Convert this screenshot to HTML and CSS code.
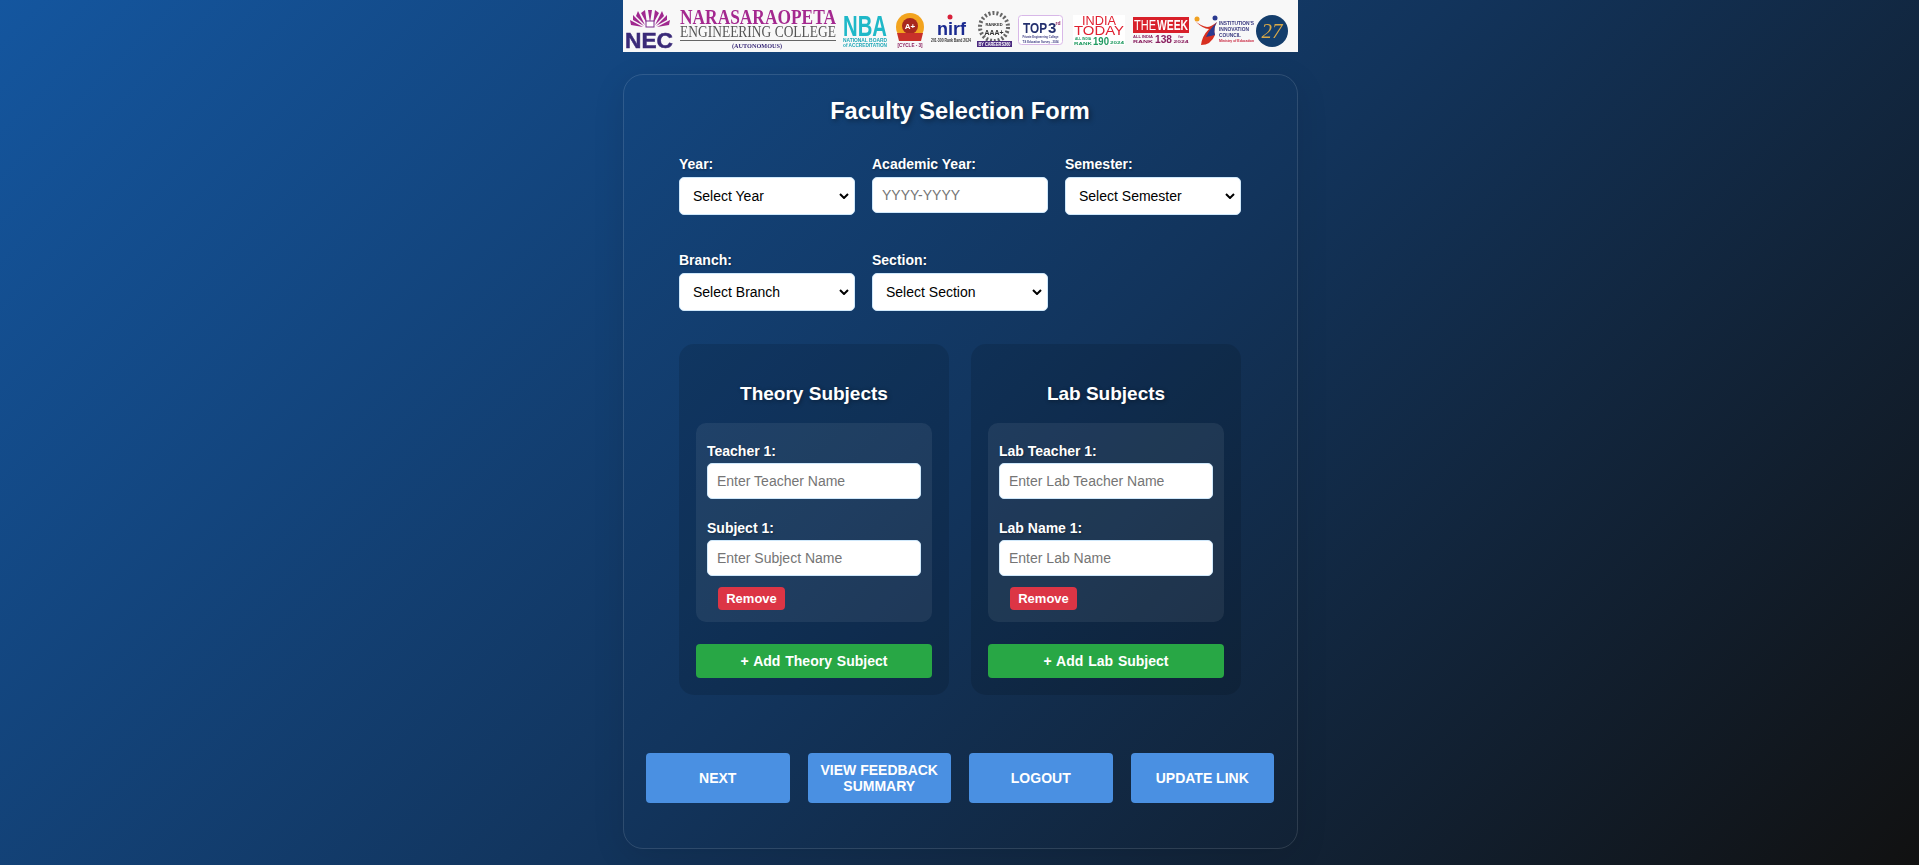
FILE: index.html
```html
<!DOCTYPE html>
<html lang="en">

<head>
    <meta charset="UTF-8">
    <meta name="viewport" content="width=device-width, initial-scale=1.0">
    <title>Faculty Selection Form</title>
    <link rel="stylesheet" href="styles.css">
</head>

<body>
    <div class="banner">
        <svg width="675" height="52" viewBox="0 0 675 52">
            <!-- NEC -->
            <g fill="#a0288f">
                <path d="M20 27 L8 25 L7 20 Z M21 26 L10 20 L10 15 Z M22 25 L13 16 L15 11 Z M24 24 L18 13 L22 10 Z M27 23 L25 10 L29 10 Z M30 24 L32 10 L36 13 Z M32 25 L39 11 L41 16 Z M33 26 L44 15 L44 20 Z M34 27 L47 20 L46 25 Z"/>
            </g>
            <rect x="23" y="21" width="8" height="6" fill="#fff" stroke="#7d2a8e"/>
            <text x="2" y="48" class="nec" textLength="48" lengthAdjust="spacingAndGlyphs">NEC</text>
            <!-- college name -->
            <text x="57" y="24" class="nara" textLength="156" lengthAdjust="spacingAndGlyphs">NARASARAOPETA</text>
            <text x="57" y="37" class="engg" textLength="156" lengthAdjust="spacingAndGlyphs">ENGINEERING COLLEGE</text>
            <rect x="57" y="40" width="156" height="1" fill="#666"/>
            <text x="134" y="48" class="auto" textLength="50" lengthAdjust="spacingAndGlyphs">(AUTONOMOUS)</text>
            <!-- NBA -->
            <text x="220" y="36" class="nba" textLength="44" lengthAdjust="spacingAndGlyphs">NBA</text>
            <text x="242" y="41.5" class="tiny teal" textLength="44" lengthAdjust="spacingAndGlyphs">NATIONAL BOARD</text>
            <text x="242" y="47" class="tiny teal" textLength="44" lengthAdjust="spacingAndGlyphs">of ACCREDITATION</text>
            <!-- NAAC -->
            <circle cx="287" cy="27" r="14" fill="#f3a41f"/>
            <circle cx="287" cy="26" r="8" fill="#a8281f"/>
            <text x="287" y="29" class="mid white">A+</text>
            <path d="M274 33 H300 L298 41 H276 Z" fill="#c8302a"/>
            <text x="287" y="47" class="tiny wine" textLength="25" lengthAdjust="spacingAndGlyphs">[CYCLE - 3]</text>
            <!-- nirf -->
            <text x="314" y="35" class="nirf" textLength="29" lengthAdjust="spacingAndGlyphs">nirf</text>
            <circle cx="327" cy="17" r="2.5" fill="#d8203a"/>
            <text x="328" y="42" class="tiny dark" textLength="40" lengthAdjust="spacingAndGlyphs">201-300 Rank Band 2024</text>
            <!-- AAA -->
            <circle cx="371" cy="27" r="14" fill="none" stroke="#666" stroke-width="4" stroke-dasharray="2 2"/>
            <text x="371" y="26" class="micro dark">RANKED</text>
            <text x="371" y="35" class="mid dark" textLength="19" lengthAdjust="spacingAndGlyphs">AAA+</text>
            <rect x="354" y="41" width="35" height="6" fill="#4b2a80"/>
            <text x="371.5" y="46" class="tiny white" textLength="32" lengthAdjust="spacingAndGlyphs">BY CAREERS360</text>
            <!-- top 3 -->
            <rect x="395.5" y="15.5" width="44" height="29" rx="3" fill="#fff" stroke="#d8b8e8"/>
            <text x="400" y="33" class="top" textLength="24" lengthAdjust="spacingAndGlyphs">TOP</text>
            <text x="425" y="33" class="top">3</text>
            <text x="435" y="25" class="tiny wine">rd</text>
            <text x="417.5" y="38" class="micro navy" textLength="36" lengthAdjust="spacingAndGlyphs">Private Engineering College</text>
            <text x="417.5" y="43" class="micro navy" textLength="36" lengthAdjust="spacingAndGlyphs">T.S Education Survey - 2024</text>
            <!-- india today -->
            <rect x="450" y="15" width="52" height="30" fill="#fff"/>
            <text x="476" y="25" class="today" textLength="34" lengthAdjust="spacingAndGlyphs">INDIA</text>
            <text x="476" y="35" class="today" textLength="50" lengthAdjust="spacingAndGlyphs">TODAY</text>
            <text x="460" y="40" class="micro green" textLength="16" lengthAdjust="spacingAndGlyphs">ALL INDIA</text>
            <text x="460" y="44.5" class="micro green" textLength="18" lengthAdjust="spacingAndGlyphs">RANK</text>
            <text x="478" y="44.5" class="rank green" textLength="16" lengthAdjust="spacingAndGlyphs">190</text>
            <text x="494" y="44" class="micro green" textLength="14" lengthAdjust="spacingAndGlyphs">2024</text>
            <!-- the week -->
            <rect x="510" y="17" width="56" height="16" fill="#d8202a"/>
            <text x="511" y="30" class="the" textLength="22" lengthAdjust="spacingAndGlyphs">THE</text>
            <text x="534" y="30" class="week" textLength="31" lengthAdjust="spacingAndGlyphs">WEEK</text>
            <text x="520" y="38" class="micro wine" textLength="20" lengthAdjust="spacingAndGlyphs">ALL INDIA</text>
            <text x="520" y="43" class="micro wine" textLength="20" lengthAdjust="spacingAndGlyphs">RANK</text>
            <text x="540.5" y="43" class="rank wine" textLength="17" lengthAdjust="spacingAndGlyphs">138</text>
            <text x="558" y="38" class="micro wine">for</text>
            <text x="558" y="43" class="micro wine" textLength="15" lengthAdjust="spacingAndGlyphs">2024</text>
            <!-- iic -->
            <path d="M572 21 Q580 29 586 29 Q579 36 578 45 Q588 45 592 35 Q590 28 594 22 Q588 27 584 27 Q578 26 572 21 Z" fill="#d83020"/>
            <path d="M594 22 Q590 28 592 35 L583 37 Q586 30 594 22 Z" fill="#2a3a90"/>
            <circle cx="574" cy="19" r="2.5" fill="#f0a020"/>
            <circle cx="592" cy="18" r="2.5" fill="#2a3a90"/>
            <text x="596" y="25" class="tiny navy start" textLength="35" lengthAdjust="spacingAndGlyphs">INSTITUTION'S</text>
            <text x="596" y="31" class="tiny navy start" textLength="30" lengthAdjust="spacingAndGlyphs">INNOVATION</text>
            <text x="596" y="37" class="tiny navy start" textLength="22" lengthAdjust="spacingAndGlyphs">COUNCIL</text>
            <text x="596" y="42" class="micro red start" textLength="35" lengthAdjust="spacingAndGlyphs">Ministry of Education</text>
            <!-- 27 -->
            <circle cx="649" cy="31" r="16" fill="#143e6c"/>
            <text x="649" y="38" class="years">27</text>
        </svg>
    </div>

    <div class="card">
        <h2 class="title">Faculty Selection Form</h2>

        <div class="row">
            <div class="field">
                <label>Year:</label>
                <select><option>Select Year</option></select>
            </div>
            <div class="field">
                <label>Academic Year:</label>
                <input type="text" placeholder="YYYY-YYYY">
            </div>
            <div class="field">
                <label>Semester:</label>
                <select><option>Select Semester</option></select>
            </div>
        </div>

        <div class="row">
            <div class="field">
                <label>Branch:</label>
                <select><option>Select Branch</option></select>
            </div>
            <div class="field">
                <label>Section:</label>
                <select><option>Select Section</option></select>
            </div>
        </div>

        <div class="subjects">
            <div class="panel">
                <h3>Theory Subjects</h3>
                <div class="entry">
                    <label>Teacher 1:</label>
                    <input type="text" placeholder="Enter Teacher Name">
                    <label class="second">Subject 1:</label>
                    <input type="text" placeholder="Enter Subject Name">
                    <button class="remove">Remove</button>
                </div>
                <button class="add">+ Add Theory Subject</button>
            </div>
            <div class="panel">
                <h3>Lab Subjects</h3>
                <div class="entry">
                    <label>Lab Teacher 1:</label>
                    <input type="text" placeholder="Enter Lab Teacher Name">
                    <label class="second">Lab Name 1:</label>
                    <input type="text" placeholder="Enter Lab Name">
                    <button class="remove">Remove</button>
                </div>
                <button class="add">+ Add Lab Subject</button>
            </div>
        </div>

        <div class="actions">
            <button>NEXT</button>
            <button>VIEW FEEDBACK SUMMARY</button>
            <button>LOGOUT</button>
            <button>UPDATE LINK</button>
        </div>
    </div>
</body>

</html>
```

FILE: styles.css
```css
* {
    box-sizing: border-box;
}

html {
    height: 100%;
}

body {
    margin: 0;
    padding-left: 2px;
    min-height: 100%;
    background: linear-gradient(135deg, #14569f 0%, #12345c 52%, #111111 100%);
    font-family: "Liberation Sans", Arial, sans-serif;
    color: #fff;
    display: flex;
    flex-direction: column;
    align-items: center;
}

.banner {
    width: 675px;
    height: 52px;
    background-color: #f8f8f8;
}

.banner svg {
    display: block;
    filter: blur(0.35px);
}

.banner text {
    font-family: "Liberation Sans", Arial, sans-serif;
    text-anchor: middle;
}

.banner .nec {
    font-size: 22px;
    font-weight: bold;
    fill: #3a2a78;
    stroke: #3a2a78;
    stroke-width: 0.5px;
    text-anchor: start;
}

.banner .nara {
    font-family: "Liberation Serif", serif;
    font-size: 21px;
    font-weight: bold;
    fill: #a4288f;
    text-anchor: start;
}

.banner .engg {
    font-family: "Liberation Serif", serif;
    font-size: 16px;
    fill: #555;
    text-anchor: start;
}

.banner .auto {
    font-family: "Liberation Serif", serif;
    font-size: 7px;
    font-weight: bold;
    fill: #3a2a78;
}

.banner .nba {
    font-size: 30px;
    font-weight: bold;
    fill: #1fb8c8;
    text-anchor: start;
}

.banner .tiny {
    font-size: 5px;
    font-weight: bold;
}

.banner .micro {
    font-size: 4px;
    font-weight: bold;
}

.banner .start {
    text-anchor: start;
}

.banner .mid {
    font-size: 8px;
    font-weight: bold;
}

.banner .nirf {
    font-size: 18px;
    font-weight: bold;
    fill: #1a2a90;
    text-anchor: start;
}

.banner .top {
    font-size: 15px;
    font-weight: bold;
    fill: #24306e;
    text-anchor: start;
}

.banner .today {
    font-size: 13px;
    fill: #e02030;
}

.banner .rank {
    font-size: 10px;
    font-weight: bold;
}

.banner .the {
    font-size: 14px;
    fill: #fff;
    text-anchor: start;
}

.banner .week {
    font-size: 14px;
    font-weight: bold;
    fill: #fff;
    text-anchor: start;
}

.banner .years {
    font-family: "Liberation Serif", serif;
    font-size: 21px;
    font-style: italic;
    fill: #d8a848;
}

.teal { fill: #1fa8b8; }
.dark { fill: #333; }
.white { fill: #fff; }
.wine { fill: #8a2060; }
.navy { fill: #3a3a80; }
.green { fill: #1f9a60; }
.red { fill: #c8203a; }

.card {
    width: 675px;
    height: 775px;
    margin-top: 22px;
    padding: 0 23px 0 22px;
    border: 1px solid rgba(255, 255, 255, 0.12);
    border-radius: 20px;
    box-shadow: 0 8px 32px rgba(0, 0, 0, 0.1);
}

.title {
    margin: 21px 0 0;
    height: 30px;
    font-size: 23.6px;
    line-height: 30px;
    text-align: center;
    text-shadow: 2px 2px 5px rgba(0, 0, 0, 0.4);
}

.row {
    display: grid;
    grid-template-columns: repeat(3, 176px);
    gap: 17px;
    width: 562px;
    margin: 0 auto;
    height: 96px;
}

.title + .row {
    margin-top: 30px;
}

.field label,
.entry label {
    display: block;
    font-size: 14px;
    font-weight: bold;
    line-height: 16px;
    margin-bottom: 5px;
    text-shadow: 1px 1px 2px rgba(0, 0, 0, 0.3);
}

select,
input {
    display: block;
    width: 100%;
    height: 36px;
    border: 1px solid #cfe8fb;
    border-radius: 5px;
    background-color: #fff;
    font-family: "Liberation Sans", Arial, sans-serif;
    font-size: 14px;
    color: #000;
}

input {
    padding: 0 9px;
}

select {
    height: 38px;
    padding: 0 9px 0 13px;
    appearance: none;
    background-image: url("data:image/svg+xml,%3Csvg xmlns='http://www.w3.org/2000/svg' width='10' height='6'%3E%3Cpath d='M1 1l4 4 4-4' fill='none' stroke='%23000' stroke-width='2'/%3E%3C/svg%3E");
    background-repeat: no-repeat;
    background-position: right 5px center;
}

.subjects {
    display: grid;
    grid-template-columns: 270px 270px;
    gap: 22px;
    width: 562px;
    margin: -4px auto 0;
}

.panel {
    height: 351px;
    padding: 37px 17px 0;
    border-radius: 15px;
    background-color: rgba(0, 0, 0, 0.12);
}

.panel h3 {
    margin: 0;
    height: 26px;
    font-size: 19px;
    line-height: 26px;
    text-align: center;
    text-shadow: 1px 1px 4px rgba(0, 0, 0, 0.4);
}

.entry {
    height: 199px;
    margin-top: 16px;
    padding: 20px 11px 0;
    border-radius: 10px;
    background-color: rgba(255, 255, 255, 0.07);
}

.entry label {
    margin-bottom: 4px;
}

.entry .second {
    margin-top: 21px;
}

.entry input {
    width: 214px;
}

button {
    font-family: "Liberation Sans", Arial, sans-serif;
    font-weight: bold;
    color: #fff;
    border: none;
    cursor: pointer;
}

.remove {
    display: block;
    width: 67px;
    height: 23px;
    margin: 11px 0 0 11px;
    padding: 0;
    border-radius: 4px;
    background-color: #dc3545;
    font-size: 13px;
}

.add {
    display: block;
    width: 100%;
    height: 34px;
    margin-top: 22px;
    border-radius: 4px;
    background-color: #28a745;
    font-size: 14px;
    word-spacing: 1px;
}

.actions {
    display: grid;
    grid-template-columns: repeat(4, 1fr);
    gap: 18px;
    margin-top: 58px;
}

.actions button {
    height: 50px;
    padding: 0 10px;
    border-radius: 4px;
    background-color: #4a90e2;
    font-size: 14px;
    line-height: 16px;
}
```
